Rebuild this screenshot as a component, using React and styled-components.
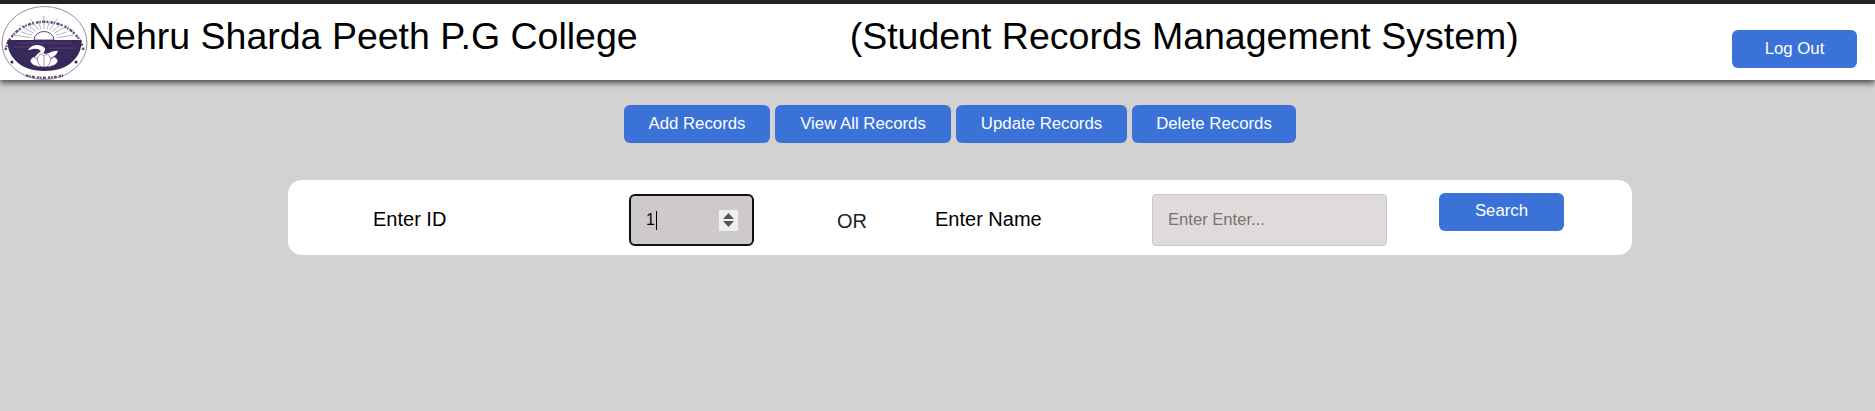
import React from "react"
import styled, { createGlobalStyle } from "styled-components"

const GlobalStyle = createGlobalStyle`
  html, body {
    margin: 0;
    padding: 0;
    background: #d3d1d2;
    font-family: "Liberation Sans", Arial, sans-serif;
  }
`

const Page = styled.div`
  width: 1875px;
  height: 411px;
  background: #d3d1d2;
  overflow: hidden;
  border-top: 4px solid #222222;
  box-sizing: border-box;
`

const Header = styled.header`
  height: 76px;
  background: #fff;
  display: flex;
  align-items: flex-start;
  box-shadow: 0 3px 6px rgba(0, 0, 0, 0.65);
`

const LogoWrap = styled.div`
  width: 88px;
  height: 76px;
  flex: none;
`

const Title = styled.h1`
  margin: 0;
  padding-top: 11px;
  font-size: 37.5px;
  font-weight: 400;
  line-height: 43px;
  color: #000;
  white-space: nowrap;
  margin-left: ${(p) => p.$left || 0}px;
`

const BlueButton = styled.button`
  width: ${(p) => p.$width}px;
  height: 38px;
  flex: none;
  padding: 0;
  background: #3a72d7;
  color: #fff;
  border: none;
  border-radius: 6px;
  font-family: "Liberation Sans", Arial, sans-serif;
  font-size: 16.8px;
`

const LogoutButton = styled(BlueButton)`
  margin-top: 26px;
  margin-left: auto;
  margin-right: 18px;
`

const Nav = styled.nav`
  display: flex;
  gap: 5px;
  justify-content: flex-start;
  padding: 25px 0 0 624px;
`

const Card = styled.section`
  width: 1344px;
  height: 75px;
  margin: 37px 0 0 288px;
  background: #fff;
  border-radius: 14px;
  display: flex;
  align-items: flex-start;
  box-sizing: border-box;
  padding-left: 85px;
`

const Label = styled.label`
  width: ${(p) => p.$width}px;
  flex: none;
  font-size: 20px;
  line-height: 23px;
  color: #000;
  margin-top: ${(p) => p.$top}px;
`

const Or = styled.span`
  width: 98px;
  flex: none;
  font-size: 20px;
  line-height: 23px;
  color: #222;
  margin-top: 30px;
`

const IdInput = styled.div`
  width: 125px;
  height: 52px;
  flex: none;
  margin: 14px 83px 0 0;
  background: #cecac9;
  border: 2px solid #111;
  border-radius: 6px;
  box-sizing: border-box;
  display: flex;
  align-items: center;
  padding: 0 14px 0 15px;
  font-size: 16px;
  color: #000;
`

const Caret = styled.span`
  width: 1px;
  height: 19px;
  background: #000;
  margin-left: 1px;
`

const Spinner = styled.span`
  width: 19px;
  height: 21px;
  margin-left: auto;
  background: #efefef;
  display: flex;
  align-items: center;
  justify-content: center;
`

const NameInput = styled.input`
  width: 235px;
  height: 52px;
  flex: none;
  margin-top: 14px;
  box-sizing: border-box;
  background: #dfdbdb;
  border: 1px solid #c9c6c6;
  border-radius: 4px;
  padding: 0 15px;
  font-family: "Liberation Sans", Arial, sans-serif;
  font-size: 16.6px;

  &::placeholder {
    color: #757575;
    opacity: 1;
  }
`

const SearchButton = styled(BlueButton)`
  margin: 13px 0 0 52px;
  padding-bottom: 2px;
`

// college seal, slightly stretched sideways as in the page
function Logo() {
  const rays = []
  for (let a = -78; a <= 78; a += 13) {
    const r = (a * Math.PI) / 180
    const long = Math.abs(a) % 26 === 0
    rays.push(
      <line
        key={a}
        x1={44 + Math.sin(r) * 13}
        y1={36 - Math.cos(r) * 11}
        x2={44 + Math.sin(r) * (long ? 31 : 25)}
        y2={36 - Math.cos(r) * (long ? 24 : 19)}
      />
    )
  }
  return (
    <svg width="88" height="76" viewBox="0 0 88 76">
      <ellipse cx="44.5" cy="39" rx="42.5" ry="36.5" fill="#fff" stroke="#77728a" strokeWidth="0.8" />
      <path d="M5.5 46 A39.5 33.5 0 0 1 83.5 46" fill="none" stroke="#5d5079" strokeWidth="2.4" strokeDasharray="2.5 0.8 1.5 1.2 3.5 1 2 2" />
      <path d="M26 71.5 Q44 76 63 71.5" fill="none" stroke="#5d5079" strokeWidth="2.4" strokeDasharray="2.5 0.8 1.5 1.2 3 2" />
      <g stroke="#96939f" strokeWidth="0.7">{rays}</g>
      <path d="M34 36 A10 8.5 0 0 1 54 36 Z" fill="#fff" stroke="#4a3a68" strokeWidth="0.9" />
      <path d="M7.5 36 H81.5 Q82 48 74 56 Q64 67 44.5 67 Q25 67 15 56 Q7 48 7.5 36 Z" fill="#38285c" />
      <g stroke="#6c6088" strokeWidth="0.5">
        <line x1="18" y1="39" x2="72" y2="39" />
        <line x1="14" y1="43" x2="40" y2="43" />
        <line x1="50" y1="44" x2="76" y2="44" />
      </g>
      <path d="M28 46 Q33 39 42 42 Q47 44 44 48 Q42 51 49 49 Q55 46 58 47 Q56 53 48 55 L34 54 Q38 49 41 47 Q38 44 33 45 Q30 46 28 46 Z" fill="#fff" />
      <path d="M30 57 Q33 50 37 55 Q40 47 44 52 Q48 47 51 55 Q55 50 58 57 Q56 63 44 63 Q32 63 30 57 Z" fill="#fff" stroke="#38285c" strokeWidth="0.5" />
      <path d="M37 55 Q38 60 41 63 M44 52 V63 M51 55 Q50 60 47 63" fill="none" stroke="#38285c" strokeWidth="0.5" />
      <circle cx="12" cy="58" r="1.5" fill="#38285c" />
      <circle cx="76" cy="58" r="1.5" fill="#38285c" />
    </svg>
  )
}

export default function App() {
  return (
    <Page>
      <GlobalStyle />
      <Header>
        <LogoWrap>
          <Logo />
        </LogoWrap>
        <Title>Nehru Sharda Peeth P.G College</Title>
        <Title $left={212}>(Student Records Management System)</Title>
        <LogoutButton $width={125}>Log Out</LogoutButton>
      </Header>
      <Nav>
        <BlueButton $width={146}>Add Records</BlueButton>
        <BlueButton $width={176}>View All Records</BlueButton>
        <BlueButton $width={171}>Update Records</BlueButton>
        <BlueButton $width={164}>Delete Records</BlueButton>
      </Nav>
      <Card>
        <Label $width={256} $top={28}>Enter ID</Label>
        <IdInput>
          1<Caret />
          <Spinner>
            <svg width="13" height="16" viewBox="0 0 13 16">
              <path d="M6.5 1 L12 7 H1 Z M6.5 15 L1 9 H12 Z" fill="#555" />
            </svg>
          </Spinner>
        </IdInput>
        <Or>OR</Or>
        <Label $width={217} $top={28}>Enter Name</Label>
        <NameInput placeholder="Enter Enter..." />
        <SearchButton $width={125}>Search</SearchButton>
      </Card>
    </Page>
  )
}
